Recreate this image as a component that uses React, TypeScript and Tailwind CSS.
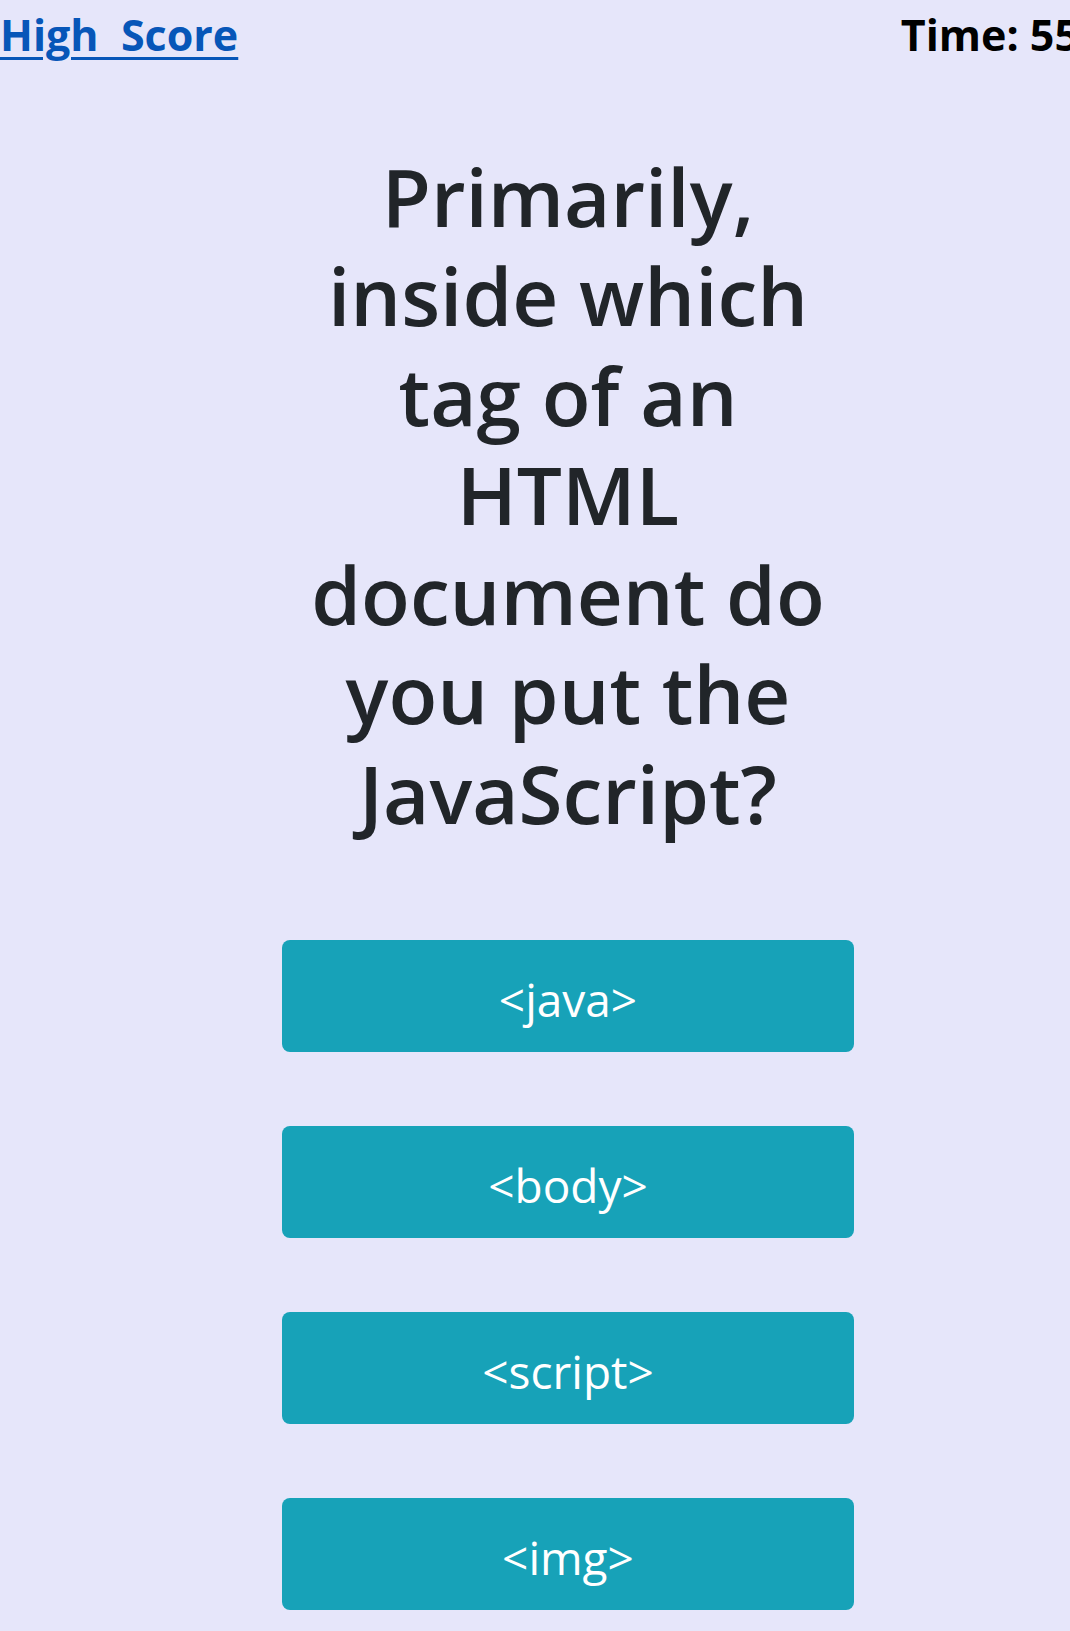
const answers = ["<java>", "<body>", "<script>", "<img>"];

export default function App() {
  return (
    <div className="min-h-screen w-full overflow-hidden bg-[#e6e6fa] font-['Open_Sans',sans-serif]">
      <div className="w-[1136px]">
        <header className="flex items-start justify-between pt-[9px]">
          <a
            href="#"
            className="text-[43px] font-bold leading-[1.2] text-[#0756b8] underline decoration-[3px] underline-offset-[6px]"
          >
            High&nbsp;&nbsp;Score
          </a>
          <p className="mr-[57px] text-[43px] font-bold leading-[1.2] text-black">Time: 55</p>
        </header>

        <main className="mx-auto w-[572px] text-center">
          <h1 className="mt-[85px] text-[80px] font-semibold leading-[99.5px] text-[#212529]">
            Primarily, inside which tag of an HTML document do you put the JavaScript?
          </h1>

          <div className="mt-[98px] flex flex-col gap-[74px] pb-[20px]">
            {answers.map((answer) => (
              <button
                key={answer}
                className="flex h-[112px] w-full items-center justify-center rounded-[8px] bg-[#17a2b8] pt-[6px] text-[46px] font-normal text-white"
              >
                {answer}
              </button>
            ))}
          </div>
        </main>
      </div>
    </div>
  );
}
